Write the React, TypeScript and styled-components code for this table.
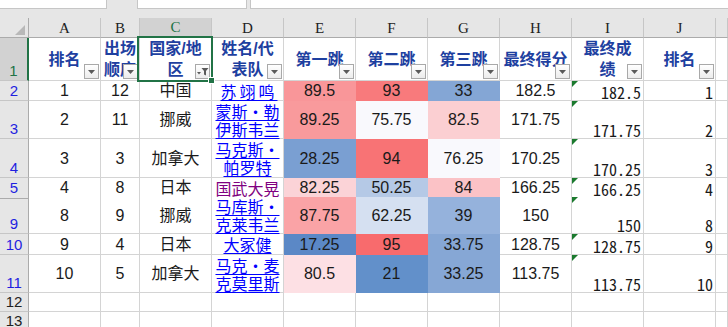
import styled, { createGlobalStyle, css } from 'styled-components'

// Sheet colours
const GREEN = '#217346'
const GRID = '#d4d4d4'
const HEAD_BG = '#e6e6e6'

const GlobalStyle = createGlobalStyle`
    html, body {
        margin: 0;
        padding: 0;
    }

    body {
        width: 728px;
        height: 327px;
        overflow: hidden;
        background: #ffffff;
        font-family: 'Liberation Sans', 'Noto Sans CJK SC', sans-serif;
    }
`

const Window = styled.div`
    background: ${HEAD_BG};
    height: 327px;
    overflow: hidden;
    width: 728px;
`

const FormulaBar = styled.div`
    align-items: flex-start;
    display: flex;
    height: 18px;
`

const BarBox = styled.div<{ $w?: number; $gap: number }>`
    background: #ffffff;
    border: 1px solid #c6c6c6;
    border-top: none;
    box-sizing: border-box;
    height: 9px;
    margin-left: ${p => p.$gap}px;
    ${p => (p.$w ? `flex: none; width: ${p.$w}px;` : 'flex: 1; margin-right: -1px;')}
`

const Sheet = styled.div`
    background: #ffffff;
    display: flex;
    flex-direction: column;
`

const SheetRow = styled.div<{ $h: number }>`
    display: grid;
    flex: none;
    grid-template-columns: 29px 72px 39px repeat(8, 72px) 12px;
    height: ${p => p.$h}px;
`

const Corner = styled.div`
    align-items: flex-end;
    background: ${HEAD_BG};
    border-bottom: 1px solid #ababab;
    border-right: 1px solid #ababab;
    box-sizing: border-box;
    display: flex;
    justify-content: flex-end;
    padding: 0 3px 2px 0;
`

const ColHead = styled.div<{ $active?: boolean }>`
    align-items: flex-end;
    background: ${p => (p.$active ? '#d2d2d2' : HEAD_BG)};
    border-bottom: ${p => (p.$active ? `2px solid ${GREEN}` : '1px solid #ababab')};
    border-right: 1px solid #c6c6c6;
    box-sizing: border-box;
    color: ${p => (p.$active ? GREEN : '#222222')};
    display: flex;
    font-family: 'Liberation Serif', serif;
    font-size: 15px;
    justify-content: center;
    line-height: 17px;
`

type Tone = 'active' | 'filtered' | 'plain'

const toneColor: Record<Tone, string> = {
    active: GREEN,
    filtered: '#1f1fe0',
    plain: '#222222',
}

const RowHead = styled.div<{ $tone: Tone; $gapAbove?: boolean }>`
    align-items: flex-end;
    background: ${p => (p.$tone === 'active' ? '#d2d2d2' : HEAD_BG)};
    border-bottom: 1px solid #c6c6c6;
    border-right: ${p => (p.$tone === 'active' ? `2px solid ${GREEN}` : '1px solid #ababab')};
    box-sizing: border-box;
    color: ${p => toneColor[p.$tone]};
    display: flex;
    font-family: 'Liberation Sans', sans-serif;
    font-size: 15px;
    justify-content: center;
    line-height: 16px;
    padding-bottom: 1px;

    ${p =>
        p.$gapAbove &&
        css`
            box-shadow: inset 0 1px 0 ${HEAD_BG}, inset 0 2px 0 #ababab;
        `}
`

const HeadCell = styled.div`
    align-items: center;
    border-bottom: 1px solid ${GRID};
    border-right: 1px solid ${GRID};
    box-sizing: border-box;
    color: #1e40a0;
    display: flex;
    font-size: 16px;
    font-weight: 700;
    justify-content: center;
    line-height: 21px;
    position: relative;
    text-align: center;
    white-space: nowrap;
`

const FilterButton = styled.span`
    align-items: center;
    background: linear-gradient(#ffffff, #ececec);
    border: 1px solid #a9a9a9;
    bottom: 1px;
    box-sizing: border-box;
    display: flex;
    height: 15px;
    justify-content: center;
    position: absolute;
    right: 1px;
    width: 15px;
`

const Selection = styled.span`
    border: 2px solid ${GREEN};
    bottom: -2px;
    left: -3px;
    pointer-events: none;
    position: absolute;
    right: -2px;
    top: -2px;
    z-index: 2;
`

const FillHandle = styled.span`
    background: ${GREEN};
    border: 1px solid #ffffff;
    bottom: -4px;
    box-sizing: border-box;
    height: 7px;
    position: absolute;
    right: -4px;
    width: 7px;
`

const Cell = styled.div<{ $fill?: string; $right?: boolean; $bottom?: boolean }>`
    align-items: ${p => (p.$bottom ? 'flex-end' : 'center')};
    background: ${p => p.$fill ?? '#ffffff'};
    border-bottom: 1px solid ${p => p.$fill ?? GRID};
    border-right: 1px solid ${p => p.$fill ?? GRID};
    box-sizing: border-box;
    color: #1a1a1a;
    display: flex;
    font-size: 16px;
    justify-content: ${p => (p.$right ? 'flex-end' : 'center')};
    line-height: 19px;
    padding: 0 2px;
    position: relative;
    text-align: center;
    white-space: nowrap;
`

const FigureCell = styled(Cell)`
    font-family: 'Noto Sans Mono CJK SC', 'Liberation Mono', monospace;
    font-size: 16px;
    line-height: 16px;
`

const NameLink = styled.a<{ $visited?: boolean; $spread?: boolean }>`
    color: ${p => (p.$visited ? '#800080' : '#0000ff')};
    font-family: 'Noto Sans CJK SC', sans-serif;
    font-feature-settings: 'fwid' 1;
    letter-spacing: ${p => (p.$spread ? '3px' : '0')};
    line-height: 18px;
    padding-left: ${p => (p.$spread ? '3px' : '0')};
    text-decoration: underline;
    text-underline-offset: 2px;
`

const ErrorMark = styled.span`
    border-right: 6px solid transparent;
    border-top: 6px solid #1b7a2e;
    height: 0;
    left: 0;
    position: absolute;
    top: 0;
    width: 0;
`

type Score = { v: string; bg: string }

type Entry = {
    n: number
    h: number
    rank: string
    order: string
    country: string
    name: string[]
    visited?: boolean
    spread?: boolean
    scores: Score[]
    total: string
    final: string
    place: string
}

const HEADERS: { lines: string[]; filtered?: boolean }[] = [
    { lines: ['排名'] },
    { lines: ['出场', '顺序'] },
    { lines: ['国家/地', '区'], filtered: true },
    { lines: ['姓名/代', '表队'] },
    { lines: ['第一跳'] },
    { lines: ['第二跳'] },
    { lines: ['第三跳'] },
    { lines: ['最终得分'] },
    { lines: ['最终成', '绩'] },
    { lines: ['排名'] },
]

const ENTRIES: Entry[] = [
    {
        n: 2, h: 20, rank: '1', order: '12', country: '中国', name: ['苏翊鸣'], spread: true,
        scores: [{ v: '89.5', bg: '#f99699' }, { v: '93', bg: '#f87a7c' }, { v: '33', bg: '#84a6d5' }],
        total: '182.5', final: '182.5', place: '1',
    },
    {
        n: 3, h: 38, rank: '2', order: '11', country: '挪威', name: ['蒙斯·勒', '伊斯韦兰'],
        scores: [{ v: '89.25', bg: '#f99a9c' }, { v: '75.75', bg: '#f9f9fd' }, { v: '82.5', bg: '#fbcfd2' }],
        total: '171.75', final: '171.75', place: '2',
    },
    {
        n: 4, h: 39, rank: '3', order: '3', country: '加拿大', name: ['马克斯·', '帕罗特'],
        scores: [{ v: '28.25', bg: '#7a9fd2' }, { v: '94', bg: '#f87375' }, { v: '76.25', bg: '#f9f9fd' }],
        total: '170.25', final: '170.25', place: '3',
    },
    {
        n: 5, h: 19, rank: '4', order: '8', country: '日本', name: ['国武大晃'], visited: true,
        scores: [{ v: '82.25', bg: '#fbd3d7' }, { v: '50.25', bg: '#b5c9e6' }, { v: '84', bg: '#fbc2c6' }],
        total: '166.25', final: '166.25', place: '4',
    },
    {
        n: 9, h: 37, rank: '8', order: '9', country: '挪威', name: ['马库斯·', '克莱韦兰'],
        scores: [{ v: '87.75', bg: '#faa3a6' }, { v: '62.25', bg: '#d5e0f1' }, { v: '39', bg: '#95b2dc' }],
        total: '150', final: '150', place: '8',
    },
    {
        n: 10, h: 21, rank: '9', order: '4', country: '日本', name: ['大冢健'],
        scores: [{ v: '17.25', bg: '#5b88c6' }, { v: '95', bg: '#f86b6d' }, { v: '33.75', bg: '#86a7d5' }],
        total: '128.75', final: '128.75', place: '9',
    },
    {
        n: 11, h: 38, rank: '10', order: '5', country: '加拿大', name: ['马克·麦', '克莫里斯'],
        scores: [{ v: '80.5', bg: '#fde0e4' }, { v: '21', bg: '#6290ca' }, { v: '33.25', bg: '#86a7d5' }],
        total: '113.75', final: '113.75', place: '10',
    },
]

const COLUMNS = ['A', 'B', 'C', 'D', 'E', 'F', 'G', 'H', 'I', 'J', '']

function Lines({ lines }: { lines: string[] }) {
    return (
        <>
            {lines.map((line, i) => (
                <span key={i}>
                    {i > 0 && <br />}
                    {line}
                </span>
            ))}
        </>
    )
}

function DropArrow() {
    return (
        <svg width="7" height="4" viewBox="0 0 7 4">
            <path d="M0 0h7L3.5 4z" fill="#5a5a5a" />
        </svg>
    )
}

function FunnelArrow() {
    return (
        <svg width="12" height="9" viewBox="0 0 12 9">
            <path d="M0 5h4L2 7.5z" fill="#5a5a5a" />
            <path d="M4.5 1h7L9 4v4.5L7 7.5V4z" fill="#5a5a5a" />
        </svg>
    )
}

function EmptyRow({ n }: { n: number }) {
    return (
        <SheetRow $h={19}>
            <RowHead $tone="plain">{n}</RowHead>
            {COLUMNS.map((c, i) => (
                <Cell key={i} />
            ))}
        </SheetRow>
    )
}

export default function App() {
    return (
        <Window>
            <GlobalStyle />
            <FormulaBar>
                <BarBox $w={108} $gap={-1} />
                <BarBox $w={110} $gap={30} />
                <BarBox $gap={3} />
            </FormulaBar>
            <Sheet>
                <SheetRow $h={20}>
                    <Corner>
                        <svg width="10" height="10" viewBox="0 0 10 10">
                            <path d="M10 0V10H0z" fill="#b8b8b8" />
                        </svg>
                    </Corner>
                    {COLUMNS.map(c => (
                        <ColHead key={c || 'K'} $active={c === 'C'}>
                            {c}
                        </ColHead>
                    ))}
                </SheetRow>

                <SheetRow $h={43}>
                    <RowHead $tone="active">1</RowHead>
                    {HEADERS.map((h, i) => (
                        <HeadCell key={i}>
                            <div>
                                <Lines lines={h.lines} />
                            </div>
                            <FilterButton>{h.filtered ? <FunnelArrow /> : <DropArrow />}</FilterButton>
                            {h.filtered && (
                                <Selection>
                                    <FillHandle />
                                </Selection>
                            )}
                        </HeadCell>
                    ))}
                    <Cell />
                </SheetRow>

                {ENTRIES.map(e => (
                    <SheetRow key={e.n} $h={e.h}>
                        <RowHead $tone="filtered" $gapAbove={e.n === 9}>
                            {e.n}
                        </RowHead>
                        <Cell>{e.rank}</Cell>
                        <Cell>{e.order}</Cell>
                        <Cell>{e.country}</Cell>
                        <Cell>
                            <NameLink href="#" $visited={e.visited} $spread={e.spread}>
                                <Lines lines={e.name} />
                            </NameLink>
                        </Cell>
                        {e.scores.map((s, i) => (
                            <Cell key={i} $fill={s.bg}>
                                {s.v}
                            </Cell>
                        ))}
                        <Cell>{e.total}</Cell>
                        <FigureCell $right $bottom>
                            <ErrorMark />
                            {e.final}
                        </FigureCell>
                        <FigureCell $right $bottom>
                            {e.place}
                        </FigureCell>
                        <Cell />
                    </SheetRow>
                ))}

                <EmptyRow n={12} />
                <EmptyRow n={13} />
            </Sheet>
        </Window>
    )
}
